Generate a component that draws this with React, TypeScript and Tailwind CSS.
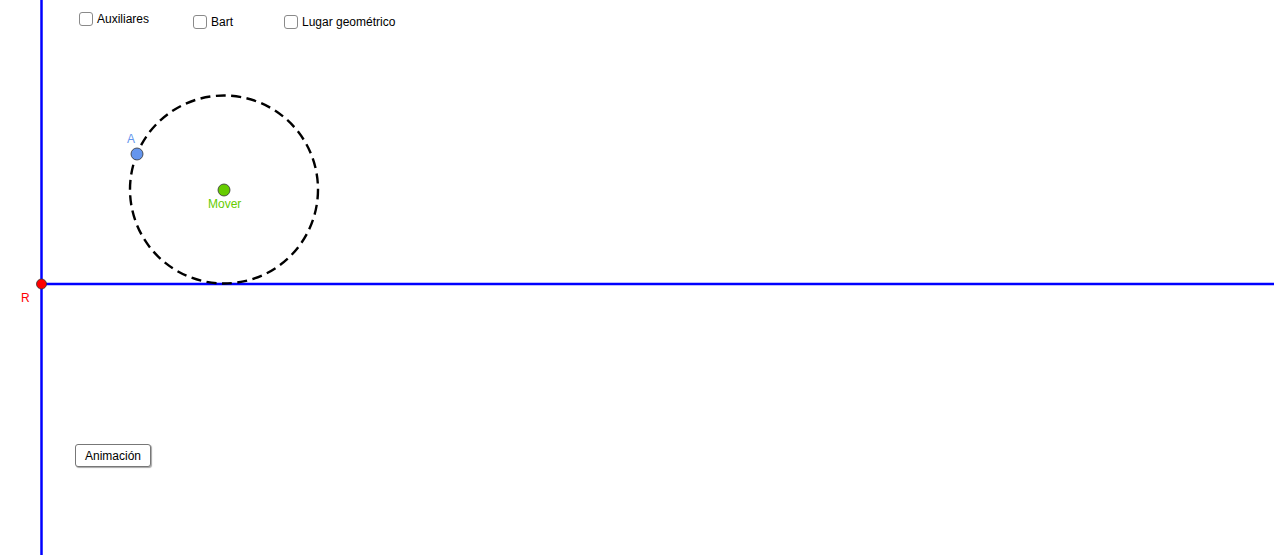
import React from 'react';

function Check({ label, className }: { label: string; className: string }) {
  return (
    <label className={`absolute flex items-center gap-[4px] text-[12px] leading-[14px] text-black ${className}`}>
      <span className="block w-[14px] h-[14px] rounded-[3px] border-[1.5px] border-[#8a8a8a] bg-white" />
      <span>{label}</span>
    </label>
  );
}

export default function App() {
  return (
    <div
      className="relative w-[1276px] h-[555px] bg-white overflow-hidden"
      style={{ fontFamily: '"Liberation Sans", Arial, sans-serif' }}
    >
      <svg className="absolute inset-0" width={1276} height={555} viewBox="0 0 1276 555">
        {/* axes-like lines */}
        <line x1={41.5} y1={0} x2={41.5} y2={555} stroke="#0000ff" strokeWidth={2.5} />
        <line x1={41.5} y1={284} x2={1274} y2={284} stroke="#0000ff" strokeWidth={2.5} />

        {/* dashed circle */}
        <circle
          cx={224}
          cy={189.5}
          r={94}
          fill="none"
          stroke="#000"
          strokeWidth={2.4}
          strokeDasharray="10 5.5"
        />

        {/* points */}
        <circle cx={137} cy={154} r={6} fill="#6495ed" stroke="#333" strokeWidth={0.8} />
        <circle cx={224} cy={190} r={6} fill="#66cc00" stroke="#333" strokeWidth={0.8} />
        <circle cx={41.5} cy={284} r={5} fill="#ff0000" stroke="#333" strokeWidth={0.8} />

        {/* labels */}
        <text x={127} y={143} fontSize={12} fill="#6495ed" fontFamily="Liberation Sans, Arial, sans-serif">A</text>
        <text x={208} y={208} fontSize={12} fill="#66cc00" fontFamily="Liberation Sans, Arial, sans-serif">Mover</text>
        <text x={21} y={302} fontSize={12} fill="#ff0000" fontFamily="Liberation Sans, Arial, sans-serif">R</text>
      </svg>

      <Check label="Auxiliares" className="left-[79px] top-[12px]" />
      <Check label="Bart" className="left-[193px] top-[15px]" />
      <Check label="Lugar geométrico" className="left-[284px] top-[15px]" />

      <button className="absolute left-[75px] top-[444px] w-[76px] h-[23px] rounded-[3px] border border-[#777] bg-white text-[12px] text-black shadow-[1px_1px_1px_rgba(0,0,0,0.35)]">
        Animación
      </button>
    </div>
  );
}
